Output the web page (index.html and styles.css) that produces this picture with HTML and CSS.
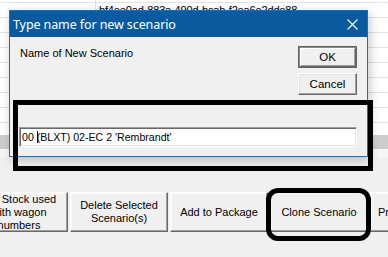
FILE: index.html
```html
<!DOCTYPE html>
<html lang="en">
<head>
  <meta charset="UTF-8">
  <title>Type name for new scenario</title>
  <link rel="stylesheet" href="styles.css">
</head>
<body>
  <div class="app">
    <div class="grid">
      <div class="row stub"><div class="cell"></div><div class="cell wide"></div></div>
      <div class="row"><div class="cell"></div><div class="cell wide">bf4ee0ad-883a-490d-bcab-f2ea6e2dde88</div></div>
      <div class="row"><div class="cell"></div><div class="cell wide"></div></div>
      <div class="row"><div class="cell"></div><div class="cell wide"></div></div>
      <div class="row"><div class="cell"></div><div class="cell wide"></div></div>
      <div class="row"><div class="cell"></div><div class="cell wide"></div></div>
      <div class="row"><div class="cell"></div><div class="cell wide"></div></div>
      <div class="row"><div class="cell"></div><div class="cell wide"></div></div>
      <div class="row"><div class="cell"></div><div class="cell wide"></div></div>
      <div class="row"><div class="cell"></div><div class="cell wide"></div></div>
    </div>
    <div class="hbar"></div>
    <div class="panel">
      <div class="actions">
        <button class="btn first"><span class="first-line">Stock used</span><br>with wagon<br>numbers</button>
        <button class="btn">Delete Selected<br>Scenario(s)</button>
        <button class="btn">Add to Package</button>
        <button class="btn">Clone Scenario</button>
        <button class="btn clipped">Pr</button>
      </div>
    </div>
  </div>

  <div class="dialog">
    <div class="titlebar">
      <span class="title">Type name for new scenario</span>
      <svg class="close" width="11" height="11" viewBox="0 0 11 11">
        <path d="M0.5 0.5 L10.5 10.5 M10.5 0.5 L0.5 10.5" stroke="#fff" stroke-width="1.1" fill="none"/>
      </svg>
    </div>
    <div class="dialog-body">
      <div class="top-row">
        <span class="label">Name of New Scenario</span>
        <div class="dialog-buttons">
          <button class="dbtn default">OK</button>
          <button class="dbtn">Cancel</button>
        </div>
      </div>
      <div class="field">00 <span class="caret"></span>(BLXT) 02-EC 2 'Rembrandt'</div>
    </div>
  </div>

  <div class="mark mark-field"></div>
  <div class="mark mark-clone"></div>
</body>
</html>
```

FILE: styles.css
```css
* {
  margin: 0;
  padding: 0;
  box-sizing: border-box;
}
body {
  width: 388px;
  height: 257px;
  overflow: hidden;
  position: relative;
  background: #f0f0f0;
  font-family: 'Liberation Sans', Arial, sans-serif;
  font-size: 11px;
  color: #000;
}
.grid {
  height: 135px;
  overflow: hidden;
  background: #fff;
}
.row {
  display: flex;
  height: 15px;
  border-bottom: 1px solid #e3e3e3;
}
.row.stub {
  height: 3px;
}
.cell {
  width: 96px;
  border-right: 1px solid #e3e3e3;
}
.cell.wide {
  flex: 1;
  border-right: none;
  padding: 0 0 0 3px;
  line-height: 14px;
  letter-spacing: -0.15px;
  white-space: nowrap;
}
.hbar {
  height: 14px;
  background: #cdcdcd;
}
.panel {
  height: 108px;
  padding-top: 43px;
  background: linear-gradient(#f7f7f7 0, #f7f7f7 8px, #f0f0f0 8px);
}
.actions {
  display: flex;
  gap: 2px;
  margin-left: -30px;
}
.btn {
  flex: none;
  width: 98px;
  height: 40px;
  background: #f0f0f0;
  border: 1px solid;
  border-color: #fff #696969 #696969 #fff;
  box-shadow: inset -1px -1px #a0a0a0, inset 1px 1px #f8f8f8;
  font-family: 'Liberation Sans', Arial, sans-serif;
  font-size: 11px;
  line-height: 13px;
  color: #000;
  text-align: center;
  white-space: nowrap;
}
.btn .first-line {
  padding-left: 20px;
}
.btn.clipped {
  text-align: left;
  padding-left: 7px;
}
.dialog {
  position: absolute;
  left: 9px;
  top: 10px;
  width: 359px;
  height: 147px;
  background: #f0f0f0;
  border: 1px solid #1a6fbd;
  box-shadow: 2px 3px 10px rgba(0, 0, 0, 0.22);
  display: flex;
  flex-direction: column;
}
.titlebar {
  height: 26px;
  background: #0a5aa0;
  display: flex;
  align-items: center;
  justify-content: space-between;
  padding: 0 9px 0 3px;
}
.title {
  font-family: 'Noto Sans', 'Open Sans', sans-serif;
  font-size: 12.5px;
  color: #fff;
  letter-spacing: -0.1px;
}
.close {
  display: block;
}
.dialog-body {
  flex: 1;
  padding: 9px 10px 0 9px;
}
.top-row {
  display: flex;
  justify-content: space-between;
}
.label {
  padding: 1px 0 0 1px;
  line-height: 13px;
}
.dialog-buttons {
  display: flex;
  flex-direction: column;
  gap: 5px;
}
.dbtn {
  width: 59px;
  height: 22px;
  background: #f0f0f0;
  border: 1px solid;
  border-color: #fff #696969 #696969 #fff;
  box-shadow: inset -1px -1px #a0a0a0, inset 1px 1px #e3e3e3;
  font-family: 'Liberation Sans', Arial, sans-serif;
  font-size: 11.5px;
  color: #000;
}
.dbtn.default {
  border: 1px solid #646464;
  box-shadow: inset 1px 1px #8a8a8a, inset -1px -1px #646464, inset 2px 2px #fff, inset -2px -2px #a0a0a0;
}
.field {
  margin-top: 32px;
  height: 20px;
  background: #fff;
  border: 1px solid;
  border-color: #a0a0a0 #fff #fff #a0a0a0;
  box-shadow: inset 1px 1px #696969, inset -1px -1px #e3e3e3;
  padding: 1px 0 0 2px;
  font-size: 10.6px;
  line-height: 16px;
  white-space: nowrap;
}
.caret {
  display: inline-block;
  width: 1px;
  height: 12px;
  margin-right: -1px;
  vertical-align: -2px;
  background: #000;
}
.mark {
  position: absolute;
  border: 5px solid #000;
}
.mark-field {
  left: 13px;
  top: 100px;
  width: 360px;
  height: 71px;
}
.mark-clone {
  left: 266px;
  top: 188px;
  width: 105px;
  height: 53px;
  border-radius: 12px;
}
```
